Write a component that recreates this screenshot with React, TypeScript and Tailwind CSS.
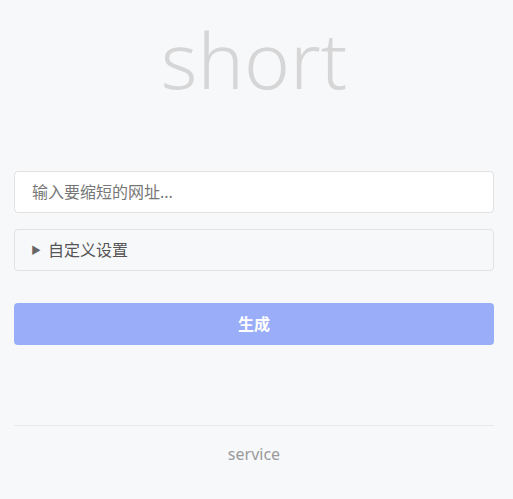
export default function App() {
  return (
    <div className="min-h-[499px] bg-[#f7f8fa] pl-[14px] pr-[19px] font-['Noto_Sans','Noto_Sans_CJK_SC',sans-serif]">
      <h1 className="pt-[9px] text-center text-[78px] font-light leading-[100px] text-[#d6d6d6]">short</h1>

      <div className="mt-[62px] flex h-[42px] items-center rounded-[4px] border border-[#e2e2e2] bg-white px-[17px] text-[16px] text-[#777]">
        输入要缩短的网址...
      </div>

      <div className="mt-[16px] flex h-[42px] items-center gap-[7px] rounded-[4px] border border-[#e2e2e2] px-[16px] text-[16px] text-[#555]">
        <span className="text-[10px] text-[#666]">▶</span>
        <span>自定义设置</span>
      </div>

      <button className="mt-[32px] flex h-[42px] w-full items-center justify-center rounded-[4px] bg-[#99adf9] text-[16px] font-bold text-white">
        生成
      </button>

      <div className="mt-[80px] border-t border-[#e8e9eb]" />
      <p className="mt-[16px] text-center text-[16px] text-[#9a9a9a]">service</p>
    </div>
  );
}
